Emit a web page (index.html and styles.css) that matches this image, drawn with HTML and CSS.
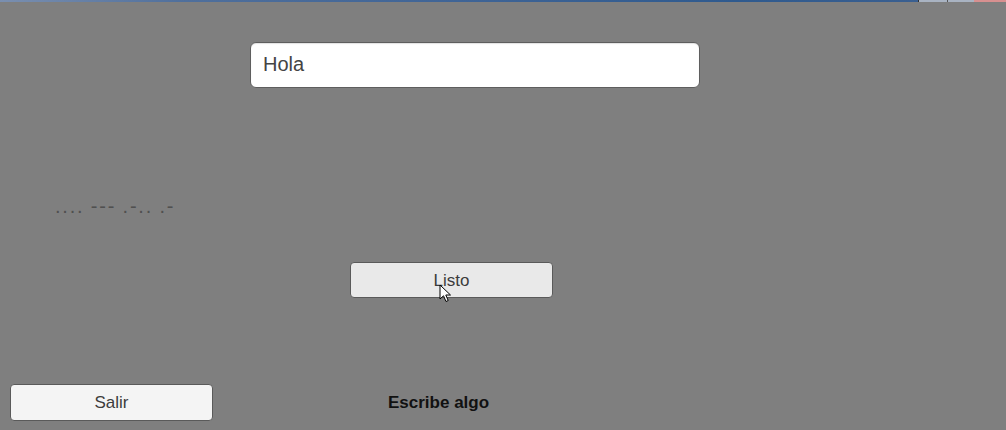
FILE: index.html
```html
<!DOCTYPE html>
<html lang="es">
<head>
<meta charset="utf-8">
<title>Morse</title>
<link rel="stylesheet" href="styles.css">
</head>
<body>
<div class="topbar">
  <div class="topbar-fill"></div>
  <div class="tb-btn tb-min"></div>
  <div class="tb-btn tb-max"></div>
  <div class="tb-btn tb-close"></div>
</div>
<main class="screen">
  <div class="input-row">
    <div class="text-input">Hola</div>
  </div>
  <div class="morse">.... --- .-.. .-</div>
  <div class="listo-row">
    <button class="btn btn-listo">Listo</button>
    <svg class="cursor" width="14" height="20" viewBox="0 0 14 20">
      <path d="M1 1 L1 15 L4.5 11.8 L7 17.5 L9.2 16.5 L6.8 11 L11.5 11 Z" fill="#fff" stroke="#000" stroke-width="1"/>
    </svg>
  </div>
  <div class="bottom-row">
    <button class="btn btn-salir">Salir</button>
    <span class="hint">Escribe algo</span>
  </div>
</main>
</body>
</html>
```

FILE: styles.css
```css
html, body {
  margin: 0;
  padding: 0;
}
body {
  width: 1006px;
  height: 430px;
  overflow: hidden;
  background: #7f7f7f;
  font-family: "Liberation Sans", Arial, sans-serif;
}
.topbar {
  display: flex;
  height: 2px;
}
.topbar-fill {
  flex: 1;
  background: linear-gradient(90deg, #7a8fb0 0%, #4f6f9c 20%, #3f6496 50%, #2f5a8e 80%, #3a5f90 100%);
}
.tb-btn {
  height: 2px;
}
.tb-min {
  width: 28px;
  background: #a9b3c2;
  border-left: 1px solid #333;
}
.tb-max {
  width: 26px;
  background: #a9b3c2;
  border-left: 1px solid #555;
}
.tb-close {
  width: 32px;
  background: #d89090;
}
.screen {
  display: flex;
  flex-direction: column;
}
.input-row {
  margin-top: 40px;
  padding-left: 250px;
}
.text-input {
  box-sizing: border-box;
  width: 450px;
  height: 46px;
  background: #fff;
  border: 1px solid #5e5e5e;
  border-radius: 6px;
  box-shadow: inset 0 1px 1px rgba(0,0,0,0.12);
  padding-left: 12px;
  font-size: 20px;
  line-height: 43px;
  color: #444;
}
.morse {
  margin-top: 106px;
  padding-left: 55px;
  font-size: 20px;
  line-height: 24px;
  letter-spacing: 1.8px;
  word-spacing: -1px;
  color: #505050;
  white-space: pre;
}
.listo-row {
  position: relative;
  margin-top: 44px;
  padding-left: 350px;
  height: 36px;
}
.btn {
  box-sizing: border-box;
  width: 203px;
  font-family: "Liberation Sans", Arial, sans-serif;
  font-size: 17px;
  color: #3c3c3c;
  border: 1px solid #5a5a5a;
  border-radius: 4px;
  padding: 0;
  display: block;
}
.btn-listo {
  height: 36px;
  background: #e9e9e9;
  padding-top: 1px;
}
.cursor {
  position: absolute;
  left: 439px;
  top: 22px;
}
.bottom-row {
  margin-top: 86px;
  padding-left: 10px;
  display: flex;
  align-items: center;
}
.btn-salir {
  height: 37px;
  background: #f4f4f4;
}
.hint {
  margin-left: 175px;
  font-size: 17px;
  font-weight: bold;
  color: #111;
}
```
